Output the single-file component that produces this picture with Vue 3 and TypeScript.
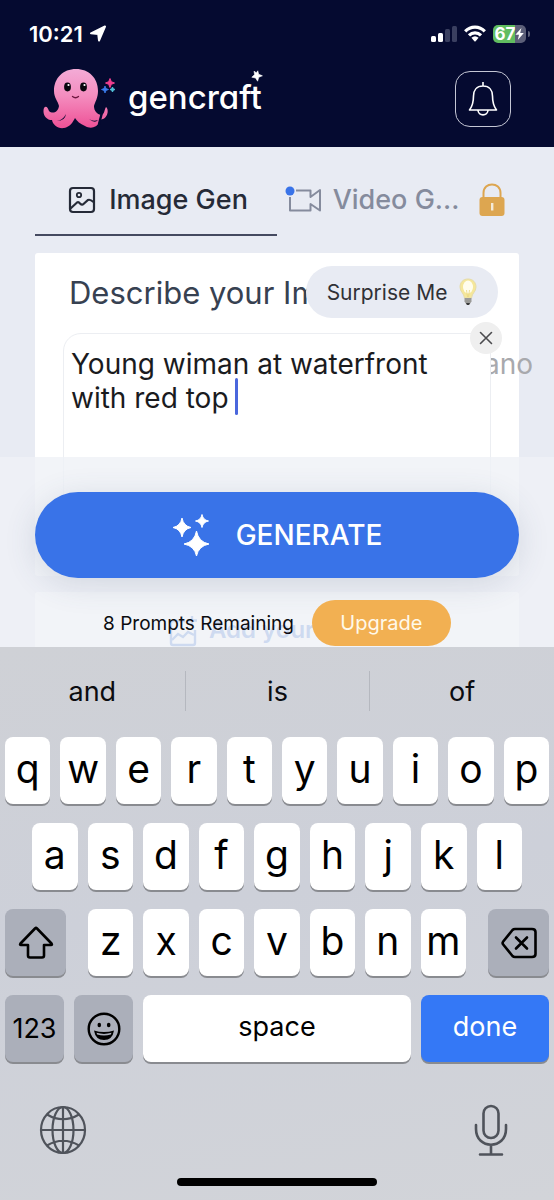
<script setup lang="ts">
import { ref } from 'vue'

const prompt = ref<string>('Young wiman at waterfront\nwith red top ')
const suggestions: string[] = ['and', 'is', 'of']
const topRow: string[] = [...'qwertyuiop']
const middleRow: string[] = [...'asdfghjkl']
const bottomRow: string[] = [...'zxcvbnm']

function clearPrompt(): void {
  prompt.value = ''
}

function type(text: string): void {
  prompt.value += text
}

function erase(): void {
  prompt.value = prompt.value.slice(0, -1)
}
</script>

<template>
  <div class="page">
    <header class="header">
      <div class="status">
        <div class="clock">
          <span>10:21</span>
          <svg width="18" height="18" viewBox="0 0 18 18" aria-hidden="true">
            <path d="M16 1.500 L10 15.500 L9.200 8.900 L2 8.300 Z" fill="#fff" stroke="#fff" stroke-width="2" stroke-linejoin="round" />
          </svg>
        </div>
        <div class="signals">
          <svg width="26" height="18" viewBox="0 0 26 18" aria-hidden="true">
            <rect x="0" y="11" width="5" height="6" rx="1.500" fill="#fff" />
            <rect x="7" y="8" width="5" height="9" rx="1.500" fill="#fff" />
            <rect x="14" y="4" width="5" height="13" rx="1.500" fill="#3a3f60" />
            <rect x="21" y="1" width="5" height="16" rx="1.500" fill="#3a3f60" />
          </svg>
          <svg width="22" height="18" viewBox="0 0 22 18" aria-hidden="true">
            <g fill="none" stroke="#fff" stroke-width="3.200">
              <path d="M1.200 6.400 C6.600 0.800 15.400 0.800 20.800 6.400" />
              <path d="M5 10.400 C8.400 7 13.600 7 17 10.400" />
            </g>
            <path d="M7.400 12.800 Q11 9.800 14.600 12.800 L11.600 16.200 Q11 16.800 10.400 16.200 Z" fill="#fff" />
          </svg>
          <div class="battery">
            <span>67</span>
            <svg width="9" height="12" viewBox="0 0 9 12" aria-hidden="true">
              <path d="M6.400 0 L0.400 6.800 H4 L2.800 12 L8.800 5 H5.200 Z" fill="#fff" />
            </svg>
          </div>
        </div>
      </div>
      <div class="brandbar">
        <a class="brand" href="#" aria-label="gencraft">
          <svg class="mascot" width="74" height="62" viewBox="0 0 74 62" aria-hidden="true">
            <defs>
              <linearGradient id="skin" x1="0" y1="0" x2="0" y2="1">
                <stop offset="0" stop-color="#f3abd6" />
                <stop offset="0.45" stop-color="#f48dbf" />
                <stop offset="1" stop-color="#ee5196" />
              </linearGradient>
            </defs>
            <path
              d="M33 1 C46 1 55 10 55 23 C55 30 52 34 51 38 C51 43 54 46 58 47 C62 46 61 42 63 39 C66 41 65 49 60 51 C57 52 56 52 56 54 C54 60 47 61 42 58 C37 56 34 53 32 50 C30 54 27 59 21 60 C15 61 10 57 9 52 C3 52 -1 46 1 40 C3 37 5 40 6 43 C9 46 15 45 16 38 C15 33 11 30 11 23 C11 10 20 1 33 1 Z"
              fill="url(#skin)"
            />
            <path d="M14 53 Q20 52 23 46 Q22 53 14 53 Z M46 51 Q50 54 55 52 Q52 56 46 51 Z" fill="#050a30" />
            <path d="M62 33 L56 56" stroke="#050a30" stroke-width="2.400" />
            <ellipse cx="24.500" cy="19" rx="3.400" ry="4.400" fill="#08060d" />
            <ellipse cx="40.500" cy="19" rx="3.400" ry="4.400" fill="#08060d" />
            <circle cx="25.500" cy="17" r="1.100" fill="#fff" />
            <circle cx="41.500" cy="17" r="1.100" fill="#fff" />
            <path d="M29.500 28.500 Q32.500 31 35.500 28.500" fill="none" stroke="#6c173f" stroke-width="1.300" stroke-linecap="round" />
            <path d="M67 10.500 L68.300 13.700 L71.500 15 L68.300 16.300 L67 19.500 L65.700 16.300 L62.500 15 L65.700 13.700 Z" fill="#ef3f8f" stroke="#ef3f8f" />
            <path d="M62 18 L63 20.500 L65.500 21.500 L63 22.500 L62 25 L61 22.500 L58.500 21.500 L61 20.500 Z" fill="#3b7df0" stroke="#3b7df0" stroke-width="0.800" />
            <path d="M69.500 19 L70.300 20.700 L72 21.500 L70.300 22.300 L69.500 24 L68.700 22.300 L67 21.500 L68.700 20.700 Z" fill="#52c0d8" stroke="#52c0d8" />
          </svg>
          <span class="wordmark">gencraft
            <svg class="spark" width="12" height="12" viewBox="0 0 12 12" aria-hidden="true">
              <path d="M6.800 0.800 L7.600 4.200 L11.400 5.800 L7.800 7.200 L6.600 11.200 L4.600 8 L0.800 7.200 L3.600 4.600 L3 1.200 L5.400 2.800 Z" fill="#fff" stroke="#fff" stroke-width="0.600" stroke-linejoin="round" />
            </svg>
          </span>
        </a>
        <button class="bell" type="button" aria-label="Notifications">
          <svg width="30" height="36" viewBox="0 0 30 36" fill="none" stroke="#fff" stroke-width="1.600" aria-hidden="true">
            <path d="M15 1 V5 M15 5 C8.500 5 5.500 9.500 5.500 15 C5.500 22 4.500 25 1.500 29 H28.500 C25.500 25 24.500 22 24.500 15 C24.500 9.500 21.500 5 15 5 Z" stroke-linejoin="round" />
            <path d="M10 29 C10 35.500 20 35.500 20 29" />
          </svg>
        </button>
      </div>
    </header>

    <main class="main">
      <nav class="tabs">
        <button class="tab active" type="button">
          <svg width="28" height="28" viewBox="0 0 28 28" fill="none" stroke="currentColor" stroke-width="2.200" aria-hidden="true">
            <rect x="2" y="2" width="24" height="24" rx="3" />
            <circle cx="11" cy="9" r="2.200" stroke-width="1.800" />
            <path d="M2.500 22.500 L9 16.500 Q10.500 15.500 12 17.500 Q14 19.500 15.500 18 L20 14 Q22 13 25.500 16" />
          </svg>
          <span>Image Gen</span>
        </button>
        <button class="tab locked" type="button">
          <svg width="38" height="30" viewBox="0 0 38 30" fill="none" aria-hidden="true">
            <path d="M11 5.500 H25.500 V12 L35 5 V25.500 L25.500 19 V25.500 H5 V12" stroke="#858b9d" stroke-width="2" stroke-linejoin="round" />
            <circle cx="5" cy="6" r="4.500" fill="#3973e8" />
          </svg>
          <span>Video G...</span>
          <svg class="lock" width="26" height="34" viewBox="0 0 26 34" aria-hidden="true">
            <path d="M4.500 15 V10 C4.500 -1.500 21.500 -1.500 21.500 10 V15" fill="none" stroke="#dda650" stroke-width="2" />
            <rect x="0.500" y="14" width="25" height="19" rx="3" fill="#dda650" />
            <rect x="12" y="20" width="2.400" height="7.500" fill="#f4ead8" />
          </svg>
        </button>
      </nav>

      <section class="card">
        <div class="card-head">
          <label class="title" for="prompt">Describe your Im</label>
          <button class="surprise" type="button">
            <span>Surprise Me</span>
            <svg width="18" height="28" viewBox="0 0 18 28" aria-hidden="true">
              <path d="M9 1 C4 1 1 4.500 1 9 C1 14 5 15 5.500 20 H12.500 C13 15 17 14 17 9 C17 4.500 14 1 9 1 Z" fill="#f5e79a" stroke="#e6dca9" />
              <ellipse cx="9" cy="9" rx="5" ry="6.500" fill="#fffdec" />
              <path d="M7.500 12 L8.500 19 M10.500 12 L9.500 19" stroke="#e8d580" stroke-width="0.800" />
              <path d="M5.500 20 H12.500 V23.500 L10.500 26.500 H7.500 L5.500 23.500 Z" fill="#9a9a97" />
              <path d="M7 25 H11 L10 27 H8 Z" fill="#393939" />
            </svg>
          </button>
        </div>
        <div class="editor">
          <span class="marquee" aria-hidden="true">ano</span>
          <textarea id="prompt" v-model="prompt" spellcheck="false"></textarea>
          <span class="caret" aria-hidden="true"></span>
          <button class="clear" type="button" aria-label="Clear prompt" @click="clearPrompt">
            <svg width="14" height="14" viewBox="0 0 14 14" stroke="#4b4b4e" stroke-width="1.600" stroke-linecap="round" aria-hidden="true">
              <path d="M1.500 1.500 L12.500 12.500 M12.500 1.500 L1.500 12.500" />
            </svg>
          </button>
        </div>
      </section>

      <section class="card upload">
        <svg width="28" height="32" viewBox="0 0 28 32" fill="none" stroke="currentColor" stroke-width="2.400" aria-hidden="true">
          <path d="M16 6 H4 Q2 6 2 8 V28 Q2 30 4 30 H24 Q26 30 26 28 V15 M23 1 V10 M18 5.500 H28" />
          <path d="M3 25 L9 19 L14 22 L19 17 L25 20" />
        </svg>
        <span>Add your</span>
      </section>

      <div class="dock">
        <button class="generate" type="button">
          <svg width="38" height="44" viewBox="0 0 38 44" fill="#fff" aria-hidden="true">
            <path d="M10 5 Q11.500 13 19 14.500 Q11.500 16 10 24 Q8.500 16 1 14.500 Q8.500 13 10 5 Z" stroke="#fff" stroke-linejoin="round" />
            <path d="M30 1.500 Q31 7 36.500 8 Q31 9 30 14.500 Q29 9 23.500 8 Q29 7 30 1.500 Z" stroke="#fff" stroke-linejoin="round" />
            <path d="M24.500 18 Q26.500 29 37 31 Q26.500 33 24.500 43 Q22.500 33 12 31 Q22.500 29 24.500 18 Z" stroke="#fff" stroke-linejoin="round" />
          </svg>
          <span>GENERATE</span>
        </button>
        <div class="quota">
          <span>8 Prompts Remaining</span>
          <button class="upgrade" type="button">Upgrade</button>
        </div>
      </div>
    </main>

    <section class="keyboard" aria-label="Keyboard">
      <div class="suggestions">
        <button v-for="word in suggestions" :key="word" type="button" @click="type(word + ' ')">{{ word }}</button>
      </div>
      <div class="rows">
        <div class="row">
          <button v-for="k in topRow" :key="k" class="key" type="button" @click="type(k)">{{ k }}</button>
        </div>
        <div class="row middle">
          <button v-for="k in middleRow" :key="k" class="key" type="button" @click="type(k)">{{ k }}</button>
        </div>
        <div class="row lower">
          <button class="key grey side" type="button" aria-label="Shift">
            <svg width="36" height="34" viewBox="0 0 36 34" fill="none" stroke="#000" stroke-width="2.600" stroke-linejoin="round" aria-hidden="true">
              <path d="M17 2.500 Q18 1.500 19 2.500 L33.500 17.500 Q34.500 19 33 19 H26 V29.500 Q26 31.500 24 31.500 H12 Q10 31.500 10 29.500 V19 H3 Q1.500 19 2.500 17.500 Z" />
            </svg>
          </button>
          <div class="row letters">
            <button v-for="k in bottomRow" :key="k" class="key" type="button" @click="type(k)">{{ k }}</button>
          </div>
          <button class="key grey side" type="button" aria-label="Delete" @click="erase">
            <svg width="36" height="32" viewBox="0 0 36 32" fill="none" stroke="#000" stroke-width="2.600" stroke-linejoin="round" stroke-linecap="round" aria-hidden="true">
              <path d="M14 2 H31 Q34.500 2 34.500 5 V27 Q34.500 30 31 30 H14 Q12.500 30 11.500 29 L2.200 17.500 Q1 16 2.200 14.500 L11.500 3 Q12.500 2 14 2 Z" />
              <path d="M15 10.500 L26 21.500 M26 10.500 L15 21.500" />
            </svg>
          </button>
        </div>
        <div class="row">
          <button class="key grey num" type="button">123</button>
          <button class="key grey num" type="button" aria-label="Emoji">
            <svg width="34" height="34" viewBox="0 0 34 34" fill="none" aria-hidden="true">
              <circle cx="17" cy="17" r="15.300" stroke="#000" stroke-width="2.400" />
              <ellipse cx="12.300" cy="13" rx="1.800" ry="2.300" fill="#000" />
              <ellipse cx="21.700" cy="13" rx="1.800" ry="2.300" fill="#000" />
              <path d="M7 18.500 Q17 21.500 27 18.500 Q25.500 28 17 28 Q8.500 28 7 18.500 Z" fill="#000" />
              <path d="M9.500 20.800 Q17 23 24.500 20.800 L23.800 22.500 Q17 24.500 10.200 22.500 Z" fill="#abafba" />
            </svg>
          </button>
          <button class="key word" type="button" @click="type(' ')">space</button>
          <button class="key done" type="button">done</button>
        </div>
      </div>
      <div class="tools">
        <button type="button" aria-label="Next keyboard">
          <svg width="48" height="50" viewBox="0 0 48 50" fill="none" stroke="#4f535b" stroke-width="2.200" aria-hidden="true">
            <ellipse cx="24" cy="25" rx="22" ry="23" />
            <ellipse cx="24" cy="25" rx="10.500" ry="23" />
            <path d="M24 2 V48 M2 25 H46 M8 9.500 Q24 19 40 9.500 M8 40.500 Q24 31 40 40.500" />
          </svg>
        </button>
        <button type="button" aria-label="Dictation">
          <svg width="34" height="52" viewBox="0 0 34 52" fill="none" stroke="#4f535b" stroke-width="2.600" stroke-linecap="round" aria-hidden="true">
            <rect x="9.500" y="2" width="15" height="32" rx="7.500" />
            <path d="M2 21 V25 C2 46 32 46 32 25 V21 M17 41 V50 M6 50.500 H28" />
          </svg>
        </button>
      </div>
      <div class="home"></div>
    </section>
  </div>
</template>

<style>
body {
  margin: 0;
  background: #d0d3da;
}
</style>

<style scoped>
.page {
  display: flex;
  flex-direction: column;
  min-height: 100vh;
  font-family: Inter, "Liberation Sans", sans-serif;
  color: #0b0c10;
}

button {
  display: flex;
  align-items: center;
  justify-content: center;
  margin: 0;
  padding: 0;
  border: 0;
  background: none;
  font: inherit;
  color: inherit;
}

svg {
  display: block;
  flex: none;
}

.header {
  background: #050a30;
  color: #fff;
  padding: 20px 24px 18px 29px;
}

.status {
  display: flex;
  justify-content: space-between;
  align-items: center;
  height: 28px;
}

.clock {
  display: flex;
  align-items: center;
  gap: 6px;
  font-size: 22px;
  font-weight: 600;
}

.signals {
  display: flex;
  align-items: center;
  gap: 7px;
}

.battery {
  position: relative;
  display: flex;
  align-items: center;
  justify-content: center;
  width: 33px;
  height: 18px;
  margin-right: 4px;
  border-radius: 5px;
  background: linear-gradient(90deg, #61bd60 67%, #5c5f78 67%);
  font-size: 17px;
  font-weight: 700;
}

.battery::after {
  content: "";
  position: absolute;
  right: -4px;
  top: 6px;
  width: 2px;
  height: 6px;
  border-radius: 0 2px 2px 0;
  background: #5c5f78;
}

.brandbar {
  display: flex;
  justify-content: space-between;
  align-items: center;
  margin-top: 21px;
  padding: 0 19px 0 14px;
  height: 60px;
}

.brand {
  display: flex;
  align-items: center;
  gap: 11px;
  color: #fff;
  text-decoration: none;
}

.wordmark {
  position: relative;
  padding-bottom: 4px;
  font-size: 33px;
  font-weight: 500;
  line-height: 56px;
  font-feature-settings: "cv11", "ss03";
}

.spark {
  position: absolute;
  right: -1px;
  top: 1px;
}

.bell {
  width: 56px;
  height: 56px;
  border: 1px solid #c4c6d4;
  border-radius: 15px;
}

.main {
  position: relative;
  flex: 1 0 500px;
  box-sizing: border-box;
  overflow: hidden;
  padding: 18px 35px 0;
  background: #e8ebf3;
}

.tabs {
  display: grid;
  grid-template-columns: 1fr 1fr;
}

.tab {
  height: 71px;
  border-bottom: 2px solid transparent;
  font-size: 27px;
  font-weight: 500;
  color: #858b9d;
  gap: 10px;
  white-space: nowrap;
}

.tab.active {
  border-color: #454a60;
  color: #252a37;
  gap: 13px;
  padding-left: 4px;
}

.tab.locked {
  padding-right: 6px;
}

.lock {
  margin-left: 10px;
}

.card {
  margin-top: 17px;
  padding: 13px 28px 0;
  border-radius: 3px;
  background: #fff;
  box-sizing: border-box;
  height: 323px;
}

.card-head {
  position: relative;
  display: flex;
  align-items: center;
  height: 52px;
}

.title {
  padding-left: 6px;
  font-size: 31px;
  color: #374151;
  white-space: nowrap;
}

.surprise {
  position: absolute;
  right: -7px;
  top: 0;
  width: 192px;
  height: 52px;
  gap: 12px;
  border-radius: 26px;
  background: #e8ebf3;
  font-size: 21px;
  color: #303136;
}

.editor {
  position: relative;
  margin-top: 15px;
}

textarea {
  position: relative;
  display: block;
  box-sizing: border-box;
  width: 100%;
  height: 210px;
  padding: 13px 7px;
  border: 1px solid #eceef2;
  border-radius: 18px;
  background: #fff;
  resize: none;
  outline: none;
  overflow: hidden;
  font: inherit;
  font-size: 28px;
  line-height: 34px;
  color: #1a1b1e;
}

.marquee {
  position: absolute;
  right: -42px;
  top: 14px;
  font-size: 28px;
  line-height: 34px;
  color: #a8a9ad;
}

.caret {
  position: absolute;
  left: 172px;
  top: 45px;
  width: 3px;
  height: 37px;
  border-radius: 2px;
  background: #4a67dd;
}

.clear {
  position: absolute;
  right: -11px;
  top: -11px;
  width: 32px;
  height: 32px;
  border-radius: 50%;
  background: #efefef;
}

.upload {
  display: flex;
  align-items: flex-start;
  gap: 12px;
  margin-top: 16px;
  padding: 23px 0 0 134px;
  height: 120px;
  font-size: 24px;
  font-weight: 600;
  color: #4a7fd6;
}

.dock {
  position: absolute;
  left: 0;
  right: 0;
  bottom: 0;
  box-sizing: border-box;
  height: 190px;
  padding: 35px 35px 0;
  background: rgba(239, 241, 246, 0.8);
}

.generate {
  width: 100%;
  height: 86px;
  gap: 26px;
  border-radius: 43px;
  background: #3973e8;
  box-shadow: 0 6px 32px rgba(60, 80, 110, 0.16);
  font-size: 28px;
  font-weight: 500;
  color: #fff;
}

.quota {
  display: flex;
  align-items: center;
  justify-content: center;
  gap: 18px;
  margin-top: 22px;
  font-size: 19px;
}

.upgrade {
  width: 139px;
  height: 46px;
  border-radius: 23px;
  background: #f2b052;
  font-size: 20px;
  color: #fff9ea;
}

.keyboard {
  display: flex;
  flex-direction: column;
  background: linear-gradient(170deg, #cfd1d6, #cdd0d9 45%, #d2d4d9);
}

.suggestions {
  display: grid;
  grid-template-columns: repeat(3, 1fr);
  padding: 24px 0 26px;
}

.suggestions button {
  height: 40px;
  font-size: 27px;
}

.suggestions button + button {
  border-left: 1px solid #b5b8bf;
}

.rows {
  display: flex;
  flex-direction: column;
  gap: 19px;
  padding: 0 5px;
}

.row {
  display: flex;
  gap: 10px;
}

.middle {
  padding: 0 27px;
}

.lower {
  gap: 22px;
}

.letters {
  flex: 1;
}

.key {
  flex: 1 1 0;
  min-width: 0;
  height: 67px;
  padding-bottom: 4px;
  border-radius: 8px;
  background: #fff;
  box-shadow: 0 2px 0 #898b90;
  font-size: 39px;
  line-height: 48px;
  color: #000;
}

.key.grey {
  background: #abafba;
  padding: 0;
}

.key.side {
  flex: 0 0 61px;
}

.key.num {
  flex: 0 0 59px;
  font-size: 27px;
}

.key.word,
.key.done {
  font-size: 27px;
}

.key.done {
  flex: 0 0 128px;
  background: #3478f6;
  color: #fff;
}

.tools {
  display: flex;
  justify-content: space-between;
  align-items: center;
  margin-top: 42px;
  padding: 0 46px 0 39px;
}

.home {
  width: 36%;
  height: 8px;
  margin: 22px auto 14px;
  border-radius: 4px;
  background: #000;
}
</style>
